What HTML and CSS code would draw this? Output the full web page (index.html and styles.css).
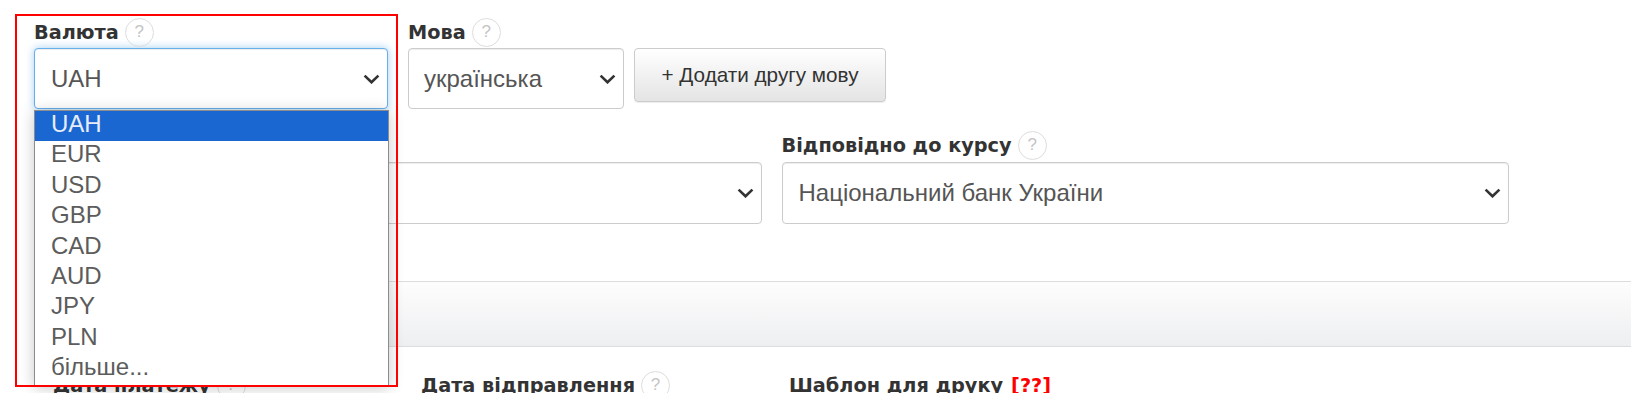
FILE: index.html
```html
<!DOCTYPE html>
<html lang="uk">
<head>
  <meta charset="UTF-8" />
  <meta name="viewport" content="width=device-width, initial-scale=1.0" />
  <title>Рахунок</title>
  <link rel="stylesheet" href="styles.css">
</head>
<body>

  <div class="page">
    <div class="row row-top">
      <div class="field field-currency">
        <div class="label">Валюта <span class="hint">?</span></div>
        <div class="select is-focused">
          <span class="value">UAH</span>
          <svg class="chevron" width="17" height="10" viewBox="0 0 17 10"><path d="M1.6 1.6 L8.5 8.3 L15.4 1.6" /></svg>
        </div>
      </div>
      <div class="field field-lang">
        <div class="label">Мова <span class="hint">?</span></div>
        <div class="lang-line">
          <div class="select select-lang">
            <span class="value">українська</span>
            <svg class="chevron" width="17" height="10" viewBox="0 0 17 10"><path d="M1.6 1.6 L8.5 8.3 L15.4 1.6" /></svg>
          </div>
          <button class="btn">+ Додати другу мову</button>
        </div>
      </div>
    </div>

    <div class="row row-rate">
      <div class="field field-half">
        <div class="label">&nbsp;</div>
        <div class="select">
          <span class="value"></span>
          <svg class="chevron" width="17" height="10" viewBox="0 0 17 10"><path d="M1.6 1.6 L8.5 8.3 L15.4 1.6" /></svg>
        </div>
      </div>
      <div class="field field-half">
        <div class="label">Відповідно до курсу <span class="hint">?</span></div>
        <div class="select">
          <span class="value">Національний банк України</span>
          <svg class="chevron" width="17" height="10" viewBox="0 0 17 10"><path d="M1.6 1.6 L8.5 8.3 L15.4 1.6" /></svg>
        </div>
      </div>
    </div>

    <div class="panel">
      <div class="panel-heading"></div>
      <div class="panel-body">
        <div class="col"><div class="label">Дата платежу <span class="hint">?</span></div></div>
        <div class="col"><div class="label">Дата відправлення <span class="hint">?</span></div></div>
        <div class="col"><div class="label">Шаблон для друку <span class="warn">[??]</span></div></div>
      </div>
    </div>

    <!-- открытый список валют -->
    <ul class="dropdown">
      <li class="active">UAH</li>
      <li>EUR</li>
      <li>USD</li>
      <li>GBP</li>
      <li>CAD</li>
      <li>AUD</li>
      <li>JPY</li>
      <li>PLN</li>
      <li>більше...</li>
    </ul>

    <div class="frame"></div>
  </div>

</body>
</html>
```

FILE: styles.css
```css
html, body {
  margin: 0;
  padding: 0;
  background: #fff;
  font-family: "Liberation Sans", Arial, sans-serif;
  overflow: hidden;
}
.page {
  position: relative;
  padding: 18px 0 0 34px;
  height: 393px;
  box-sizing: border-box;
}
.row {
  display: flex;
  gap: 20px;
}
.row-rate {
  margin-top: 22px;
  width: 1475px;
}
.field-currency {
  width: 354px;
}
.field-half {
  flex: 1;
}
.label {
  display: flex;
  align-items: center;
  height: 28px;
  margin-bottom: 2px;
  font-family: "DejaVu Sans", sans-serif;
  font-weight: bold;
  font-size: 19.3px;
  color: #333;
  white-space: nowrap;
}
.row-rate .label {
  margin-bottom: 3px;
}
.hint {
  display: inline-flex;
  align-items: center;
  justify-content: center;
  width: 29px;
  height: 29px;
  margin-left: 6px;
  border: 1px solid #ddd;
  border-radius: 50%;
  box-sizing: border-box;
  font-family: "Liberation Sans", sans-serif;
  font-weight: normal;
  font-size: 17px;
  color: #c4c4c4;
}
.warn {
  margin-left: 8px;
  color: #f00;
}
.select {
  display: flex;
  align-items: center;
  justify-content: space-between;
  height: 61px;
  padding: 0 7px 0 16px;
  border: 1px solid #ccc;
  border-radius: 4px;
  box-sizing: border-box;
  box-shadow: inset 0 1px 1px rgba(0, 0, 0, .075);
  font-size: 24px;
  color: #555;
  background: #fff;
}
.row-rate .select {
  height: 62px;
}
.select.is-focused {
  border-color: #66afe9;
  box-shadow: inset 0 1px 1px rgba(0, 0, 0, .075), 0 0 8px rgba(102, 175, 233, .6);
}
.chevron path {
  fill: none;
  stroke: #333;
  stroke-width: 2.6;
}
.lang-line {
  display: flex;
  align-items: flex-start;
}
.select-lang {
  width: 216px;
  padding-left: 15px;
}
.btn {
  width: 252px;
  height: 54px;
  margin-left: 10px;
  border: 1px solid #ccc;
  border-radius: 4px;
  background: linear-gradient(to bottom, #fff 0, #e4e4e4 100%);
  box-shadow: inset 0 1px 0 rgba(255, 255, 255, .15), 0 1px 1px rgba(0, 0, 0, .075);
  font-family: "Liberation Sans", sans-serif;
  font-size: 20.7px;
  color: #333;
  padding: 0;
}
.panel {
  margin-top: 57px;
}
.panel-heading {
  height: 66px;
  border-top: 1px solid #ddd;
  border-bottom: 1px solid #ddd;
  box-sizing: border-box;
  background: linear-gradient(to bottom, #fdfdfd 0, #eeeff1 100%);
}
.panel-body {
  display: flex;
  padding: 24px 0 0 19px;
}
.col {
  width: 368px;
}
.dropdown {
  position: absolute;
  left: 34px;
  top: 110px;
  width: 355px;
  margin: 0;
  padding: 0;
  list-style: none;
  border: 1px solid #8c8c8c;
  box-sizing: border-box;
  background: #fff;
  box-shadow: 0 2px 14px rgba(0, 0, 0, .22);
}
.dropdown li {
  height: 30.4px;
  padding-left: 16px;
  box-sizing: border-box;
  line-height: 26.7px;
  font-size: 24px;
  color: #5c5c5c;
}
.dropdown li.active {
  background: #1a67d2;
  color: #e6edf9;
}
.frame {
  position: absolute;
  left: 15px;
  top: 14px;
  width: 383px;
  height: 373px;
  border: 2px solid #f00;
  box-sizing: border-box;
}
```
